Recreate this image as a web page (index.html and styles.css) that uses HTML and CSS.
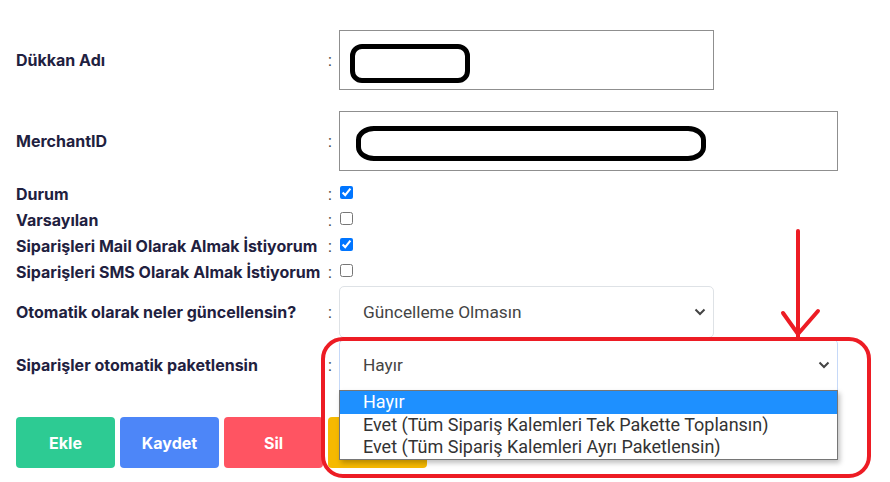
FILE: index.html
```html
<!DOCTYPE html>
<html lang="tr">
<head>
  <meta charset="UTF-8" />
  <meta name="viewport" content="width=device-width, initial-scale=1.0" />
  <title>Mağaza Ayarları</title>
  <link rel="stylesheet" href="styles.css">
</head>
<body>
  <form class="store-form">
    <div class="row row-text">
      <label class="label">Dükkan Adı</label>
      <span class="colon">:</span>
      <div class="text-box box-short">
        <span class="scribble scribble-short"></span>
      </div>
    </div>

    <div class="row row-text row-merchant">
      <label class="label">MerchantID</label>
      <span class="colon">:</span>
      <div class="text-box box-long">
        <span class="scribble scribble-long"></span>
      </div>
    </div>

    <div class="row row-check row-first-check">
      <label class="label">Durum</label>
      <span class="colon">:</span>
      <input type="checkbox" class="check" checked>
    </div>
    <div class="row row-check">
      <label class="label">Varsayılan</label>
      <span class="colon">:</span>
      <input type="checkbox" class="check">
    </div>
    <div class="row row-check">
      <label class="label">Siparişleri Mail Olarak Almak İstiyorum</label>
      <span class="colon">:</span>
      <input type="checkbox" class="check" checked>
    </div>
    <div class="row row-check">
      <label class="label">Siparişleri SMS Olarak Almak İstiyorum</label>
      <span class="colon">:</span>
      <input type="checkbox" class="check">
    </div>

    <div class="row row-select row-first-select">
      <label class="label">Otomatik olarak neler güncellensin?</label>
      <span class="colon">:</span>
      <div class="select select-short">
        <span class="select-text">Güncelleme Olmasın</span>
        <svg class="chevron" width="12" height="8" viewBox="0 0 12 8"><path d="M1.5 1.5 L6 6 L10.5 1.5" fill="none" stroke="#444" stroke-width="2"/></svg>
      </div>
    </div>

    <div class="row row-select">
      <label class="label">Siparişler otomatik paketlensin</label>
      <span class="colon">:</span>
      <div class="select-wrap">
        <div class="select select-long select-open">
          <span class="select-text">Hayır</span>
          <svg class="chevron" width="12" height="8" viewBox="0 0 12 8"><path d="M1.5 1.5 L6 6 L10.5 1.5" fill="none" stroke="#444" stroke-width="2"/></svg>
        </div>
        <ul class="options">
          <li class="option selected">Hayır</li>
          <li class="option">Evet (Tüm Sipariş Kalemleri Tek Pakette Toplansın)</li>
          <li class="option">Evet (Tüm Sipariş Kalemleri Ayrı Paketlensin)</li>
        </ul>
      </div>
    </div>

    <div class="buttons">
      <button type="button" class="btn btn-green">Ekle</button>
      <button type="button" class="btn btn-blue">Kaydet</button>
      <button type="button" class="btn btn-red">Sil</button>
      <button type="button" class="btn btn-yellow" aria-label="Temizle"></button>
    </div>
  </form>

  <!-- kırmızı işaretleme -->
  <svg class="markup" width="890" height="482" viewBox="0 0 890 482">
    <rect x="323" y="339" width="546" height="137" rx="20" fill="none" stroke="#ed1c24" stroke-width="4"/>
    <path d="M798 231 L798 337" stroke="#ed1c24" stroke-width="4" stroke-linecap="round"/>
    <path d="M783 313 L798 334 L818 311" fill="none" stroke="#ed1c24" stroke-width="4" stroke-linecap="round" stroke-linejoin="round"/>
  </svg>
</body>
</html>
```

FILE: styles.css
```css
html, body {
  height: 100%;
  overflow: hidden;
}
body {
  margin: 0;
  padding: 30px 0 0 16px;
  box-sizing: border-box;
  font-family: Roboto, "Liberation Sans", sans-serif;
  background-color: #fff;
}
.row {
  display: grid;
  grid-template-columns: 312px 11px auto;
  align-items: center;
}
.label {
  font-family: Inter, Roboto, sans-serif;
  font-size: 16px;
  font-weight: 700;
  color: #1f2140;
  white-space: nowrap;
}
.colon {
  font-size: 16px;
  color: #444;
}
.row-text {
  height: 60px;
}
.row-merchant {
  margin-top: 21px;
}
.text-box {
  box-sizing: border-box;
  height: 60px;
  border: 1px solid #8f8f8f;
  display: flex;
}
.box-short {
  width: 375px;
  padding: 13px 0 0 10px;
}
.box-long {
  width: 499px;
  padding: 14px 0 0 16px;
}
.scribble {
  box-sizing: border-box;
  display: block;
  border: 5px solid #000;
}
.scribble-short {
  width: 120px;
  height: 39px;
  border-radius: 12px;
}
.scribble-long {
  width: 350px;
  height: 35px;
  border-radius: 18px / 14px;
}
.row-check {
  height: 26px;
}
.row-first-check {
  margin-top: 10px;
}
.check {
  margin: 0 0 3px 1px;
  width: 13px;
  height: 13px;
}
.row-select {
  height: 52px;
  margin-top: 1px;
}
.row-first-select {
  margin-top: 1px;
}
.select {
  box-sizing: border-box;
  height: 52px;
  border: 1px solid #dee2e6;
  border-radius: 5px;
  display: flex;
  align-items: center;
  justify-content: space-between;
  padding: 0 7px 0 23px;
  font-size: 17.3px;
  color: #444;
}
.select-short {
  width: 375px;
}
.select-wrap {
  position: relative;
  width: 499px;
}
.select-long {
  width: 499px;
  border-color: #c6d9f8;
  border-radius: 5px 5px 0 0;
}
.options {
  position: absolute;
  top: 51px;
  left: 0;
  width: 499px;
  box-sizing: border-box;
  margin: 0;
  padding: 0;
  list-style: none;
  background-color: #fff;
  border: 1px solid #767676;
  box-shadow: 2px 3px 5px rgba(0, 0, 0, 0.25);
  z-index: 2;
}
.option {
  height: 22.6px;
  line-height: 22.6px;
  padding-left: 23px;
  font-size: 18px;
  color: #333;
}
.option.selected {
  background-color: #1e90ff;
  color: #fff;
}
.buttons {
  display: flex;
  gap: 5px;
  margin-top: 26px;
}
.btn {
  width: 99px;
  height: 51px;
  border: none;
  border-radius: 4px;
  font-family: Inter, Roboto, sans-serif;
  font-size: 16px;
  font-weight: 700;
  color: #fff;
}
.btn-green {
  background-color: #2dcb93;
}
.btn-blue {
  background-color: #4d86f8;
}
.btn-red {
  background-color: #ff5462;
}
.btn-yellow {
  background-color: #f6b900;
}
.markup {
  position: absolute;
  top: 0;
  left: 0;
  pointer-events: none;
  z-index: 3;
}
```
